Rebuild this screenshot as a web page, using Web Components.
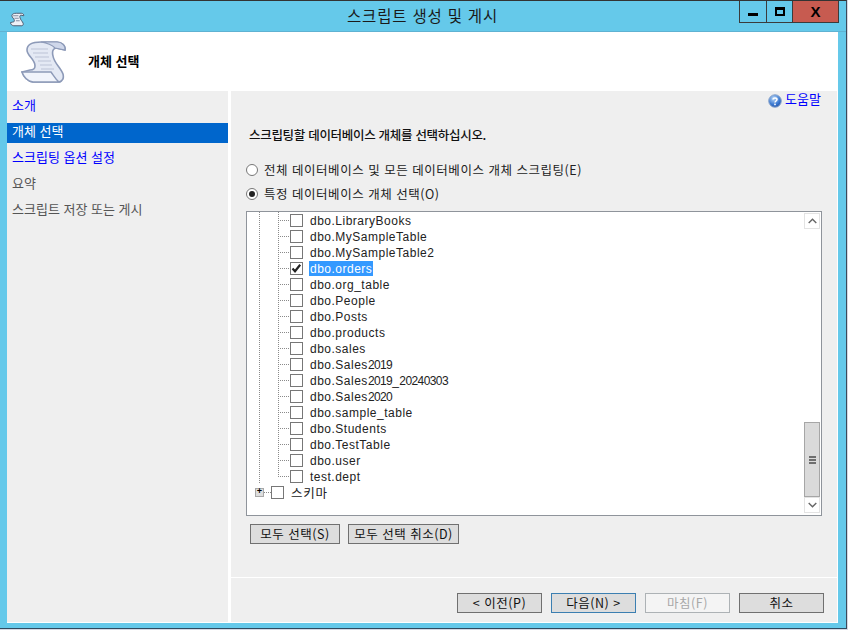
<!DOCTYPE html>
<html lang="ko">
<head>
<meta charset="utf-8">
<title>스크립트 생성 및 게시</title>
<style>
  html, body { margin: 0; height: 100%; background: #d5d8e4; overflow: hidden; }
  body { font: 12px "Noto Sans CJK KR", "Liberation Sans", sans-serif; }
</style>
</head>
<body>
<wizard-window>
  <title-bar slot="title">스크립트 생성 및 게시</title-bar>
  <wizard-header slot="header">개체 선택</wizard-header>
  <nav-panel slot="nav">
    <nav-item kind="link">소개</nav-item>
    <nav-item kind="active">개체 선택</nav-item>
    <nav-item kind="link">스크립팅 옵션 설정</nav-item>
    <nav-item>요약</nav-item>
    <nav-item>스크립트 저장 또는 게시</nav-item>
  </nav-panel>
  <object-page slot="page"></object-page>
</wizard-window>

<script>
// small helper, every element here has the same shadow setup
function shadow(el, html) {
  el.attachShadow({ mode: 'open' }).innerHTML = html;
}

const SCROLL_ICON = `
<svg viewBox="0 0 48 42" width="48" height="42">
  <path d="M20 1 C13 1 6 3 6 9 C6 15 14 18 14 25 C14 28 12 29 9 29 L1 31 C3 37 6 40 12 41 L38 41 C42 40 43 37 42 33 C40 27 33 22 32 15 C31 11 31 8 35 7 L44 9 C45 5 41 1 36 1 Z" fill="#e4e9f4" stroke="#8d9ab8" stroke-width="1.6"/>
  <path d="M1 31 L30 31 C33 35 34 38 38 41 L12 41 C6 40 3 37 1 31 Z" fill="#f1f4fb" stroke="#8d9ab8" stroke-width="1.4"/>
  <path d="M34 7 C30 3 26 2 20 1 L36 1 C41 1 45 5 44 9 Z" fill="#cfd7ea" stroke="#8d9ab8" stroke-width="1.2"/>
  <path d="M10 8 H27 M12 12 H27 M14 16 H28 M17 20 H30 M19 24 H31 M20 28 H33" stroke="#bcc4d6" stroke-width="1.2" fill="none"/>
</svg>`;

class WizardWindow extends HTMLElement {
  constructor() {
    super();
    shadow(this, `
    <style>
      :host { display: flex; flex-direction: column; width: 847px; height: 629px; box-sizing: border-box;
        background: #65c9ea; border-top: 1px solid #333; border-right: 1px solid #3c4a5a; border-bottom: 1px solid #2f4a5f; }
      .client { flex: 1; display: flex; flex-direction: column; margin: 0 8px 5px 7px; background: #fff; min-height: 0; }
      .body { flex: 1; display: flex; gap: 3px; min-height: 0; padding-right: 1px; padding-bottom: 1px; }
    </style>
    <slot name="title"></slot>
    <div class="client">
      <slot name="header"></slot>
      <div class="body"><slot name="nav"></slot><slot name="page"></slot></div>
    </div>`);
  }
}

class TitleBar extends HTMLElement {
  constructor() {
    super();
    shadow(this, `
    <style>
      :host { display: grid; grid-template-columns: 1fr auto 1fr; height: 31px; flex: none; color: #1a1a1a;
        font: 15.5px "Noto Sans CJK KR", sans-serif; box-shadow: inset 0 -1px 0 #5fb2d2; }
      .ico { padding: 8px 0 0 10px; }
      .t { line-height: 29px; letter-spacing: .8px; margin-left: -1px; }
      .btns { justify-self: end; display: flex; height: 22px; margin-right: 7px; border: 1px solid #3b3b3b; border-top: 0; box-sizing: border-box; }
      .btns div { display: flex; align-items: center; justify-content: center; box-sizing: border-box; }
      .min { width: 27px; border-right: 1px solid #3b3b3b; }
      .max { width: 26px; border-right: 1px solid #3b3b3b; }
      .cls { width: 45px; background: #c75b50; font: bold 15px "Liberation Sans", sans-serif; color: #000; }
      .min i { display: block; width: 10px; height: 3px; background: #000; margin-top: 5px; }
      .max i { display: block; width: 6px; height: 4px; border: 2px solid #000; border-top-width: 3px; }
    </style>
    <div class="ico">
      <svg viewBox="0 0 48 42" width="15" height="15">
        <path d="M20 1 C13 1 6 3 6 9 C6 15 14 18 14 25 C14 28 12 29 9 29 L1 31 C3 37 6 40 12 41 L38 41 C42 40 43 37 42 33 C40 27 33 22 32 15 C31 11 31 8 35 7 L44 9 C45 5 41 1 36 1 Z" fill="#eef1f8" stroke="#4d586c" stroke-width="3"/>
        <path d="M10 9 H27 M14 17 H28 M19 25 H31" stroke="#7c869c" stroke-width="3" fill="none"/>
      </svg>
    </div>
    <div class="t"><slot></slot></div>
    <div class="btns">
      <div class="min"><i></i></div>
      <div class="max"><i></i></div>
      <div class="cls">X</div>
    </div>`);
  }
}

class WizardHeader extends HTMLElement {
  constructor() {
    super();
    shadow(this, `
    <style>
      :host { display: flex; align-items: center; gap: 19px; height: 59px; flex: none; padding: 0 0 0 14px; background: #fff;
        font: bold 13px "Noto Sans CJK KR", sans-serif; color: #000; }
      svg { display: block; margin-top: 1px; }
      div { margin-top: -3px; }
    </style>
    ${SCROLL_ICON}
    <div><slot></slot></div>`);
  }
}

class NavPanel extends HTMLElement {
  constructor() {
    super();
    shadow(this, `
    <style>
      :host { display: flex; flex-direction: column; gap: 6px; width: 221px; flex: none; padding-top: 6px; box-sizing: border-box; background: #efefef; }
    </style>
    <slot></slot>`);
  }
}

class NavItem extends HTMLElement {
  constructor() {
    super();
    shadow(this, `
    <style>
      :host { display: block; height: 20px; padding-left: 5px; font: 13px/16px "Noto Sans CJK KR", sans-serif; color: #555; }
      :host([kind="link"]) { color: #0000ff; }
      :host([kind="active"]) { color: #fff; background: #0066cc; }
    </style>
    <slot></slot>`);
  }
}

class WinButton extends HTMLElement {
  constructor() {
    super();
    shadow(this, `
    <style>
      :host { display: flex; align-items: center; justify-content: center; box-sizing: border-box; height: 20px; width: 85px; padding-bottom: 1px;
        background: #dddddd; border: 1px solid #707070; color: #111; font: 12.5px/15px "Noto Sans CJK KR", sans-serif; letter-spacing: .5px; }
      :host([primary]) { border-color: #3c7fb1; }
      :host([disabled]) { background: #f4f4f4; border-color: #adb2b5; color: #a8a8a8; }
    </style>
    <slot></slot>`);
  }
}

class RadioOption extends HTMLElement {
  constructor() {
    super();
    shadow(this, `
    <style>
      :host { display: flex; align-items: center; gap: 6px; height: 18px; line-height: 16px; font-family: "Noto Sans CJK KR", sans-serif; font-size: 12.5px; color: #222; letter-spacing: .52px; }
      i { display: flex; align-items: center; justify-content: center; width: 12px; height: 12px; box-sizing: border-box;
        border: 1px solid #777; border-radius: 50%; background: #fff; }
      :host([checked]) i::after { content: ""; width: 6px; height: 6px; border-radius: 50%; background: #222; }
    </style>
    <i></i><div><slot></slot></div>`);
  }
}

class TreeRow extends HTMLElement {
  constructor() {
    super();
    const dots = 'repeating-linear-gradient(#8a8a8a 0 1px, transparent 1px 2px)';
    const dotsH = 'repeating-linear-gradient(90deg, #8a8a8a 0 1px, transparent 1px 2px)';
    shadow(this, `
    <style>
      :host { display: flex; align-items: center; height: 16px; font: 12px "Liberation Sans", sans-serif; color: #222; letter-spacing: .5px; }
      .rail { width: 43px; height: 16px; flex: none; background-repeat: no-repeat;
        background-image: ${dots}, ${dots}, ${dotsH};
        background-size: 1px 16px, 1px 16px, 12px 1px;
        background-position: 12px 0, 31px 0, 31px 8px; }
      :host([last]) .rail { background-size: 1px 16px, 1px 8px, 12px 1px; }
      .box { width: 13px; height: 13px; flex: none; box-sizing: border-box; border: 1px solid #777; background: #fff; display: flex; }
      .label { margin-left: 6px; padding: 0 1px 0 1px; height: 15px; line-height: 16px; white-space: nowrap; }
      :host([selected]) .label { background: #3399ff; color: #fff; }
      svg { display: none; }
      :host([checked]) svg { display: block; }
    </style>
    <div class="rail"></div>
    <div class="box"><svg viewBox="0 0 11 11" width="11" height="11"><path d="M1.5 5.5 L4 8.2 L9.2 1.8" fill="none" stroke="#222" stroke-width="2.2"/></svg></div>
    <div class="label"><slot></slot></div>`);
  }
}

class TreeBranch extends HTMLElement {
  constructor() {
    super();
    shadow(this, `
    <style>
      :host { display: flex; align-items: center; height: 16px; padding-left: 8px; font: 12.5px/15px "Noto Sans CJK KR", sans-serif; color: #222; }
      .exp { width: 9px; height: 9px; flex: none; box-sizing: border-box; border: 1px solid #a8a8a8; background: #ddd; color: #000;
        display: flex; align-items: center; justify-content: center; font: bold 9px/7px "Liberation Mono", monospace; }
      .dash { width: 7px; height: 1px; flex: none; background: repeating-linear-gradient(90deg, #8a8a8a 0 1px, transparent 1px 2px); }
      .box { width: 13px; height: 13px; flex: none; box-sizing: border-box; border: 1px solid #777; background: #fff; }
      .label { margin-left: 7px; letter-spacing: .8px; }
    </style>
    <div class="exp">+</div><div class="dash"></div><div class="box"></div>
    <div class="label"><slot></slot></div>`);
  }
}

class ScrollBar extends HTMLElement {
  constructor() {
    super();
    shadow(this, `
    <style>
      :host { display: flex; flex-direction: column; width: 16px; flex: none; background: #fff; box-sizing: border-box; }
      .arrow { height: 16px; flex: none; box-sizing: border-box; border: 1px solid #e3e3e3; background: #fff; display: flex; align-items: center; justify-content: center; }
      .track { flex: 1; display: flex; flex-direction: column; justify-content: flex-end; }
      .thumb { height: 75px; box-sizing: border-box; background: #dadada; border: 1px solid #a6a6a6; display: flex; flex-direction: column; gap: 1px; align-items: center; justify-content: center; }
      .thumb i { display: block; width: 7px; height: 2px; background: #6e6e6e; }
    </style>
    <div class="arrow"><svg width="9" height="6" viewBox="0 0 9 6"><path d="M.7 5 L4.5 1.2 L8.3 5" fill="none" stroke="#666" stroke-width="1.4"/></svg></div>
    <div class="track"><div class="thumb"><i></i><i></i><i></i></div></div>
    <div class="arrow"><svg width="9" height="6" viewBox="0 0 9 6"><path d="M.7 1 L4.5 4.8 L8.3 1" fill="none" stroke="#666" stroke-width="1.4"/></svg></div>`);
  }
}

class ObjectTree extends HTMLElement {
  constructor() {
    super();
    shadow(this, `
    <style>
      :host { display: flex; height: 305px; width: 576px; box-sizing: border-box; background: #fff; border: 1px solid #8f949b; box-shadow: inset 0 0 0 1px #fff; }
      .rows { flex: 1; min-width: 0; overflow: hidden; }
      scroll-bar { margin: 1px 1px 2px 0; }
    </style>
    <div class="rows"><slot></slot></div>
    <scroll-bar></scroll-bar>`);
  }
}

class ObjectPage extends HTMLElement {
  constructor() {
    super();
    const names = ['dbo.LibraryBooks', 'dbo.MySampleTable', 'dbo.MySampleTable2', 'dbo.orders', 'dbo.org_table',
      'dbo.People', 'dbo.Posts', 'dbo.products', 'dbo.sales', 'dbo.Sales2019', 'dbo.Sales2019_20240303', 'dbo.Sales2020',
      'dbo.sample_table', 'dbo.Students', 'dbo.TestTable', 'dbo.user', 'test.dept'];
    const rows = names.map(n => {
      const attrs = n === 'dbo.orders' ? ' checked selected' : n === 'test.dept' ? ' last' : '';
      // digits are narrower in the original font
      const label = n.replace(/\d+/g, d => `<span style="letter-spacing:-.6px">${d}</span>`);
      return `<tree-row${attrs}>${label}</tree-row>`;
    }).join('');
    shadow(this, `
    <style>
      :host { display: flex; flex-direction: column; flex: 1; min-width: 0; background: #efefef; font: 12.5px "Noto Sans CJK KR", sans-serif; color: #222; }
      .content { flex: 1; display: flex; flex-direction: column; padding: 0 16px 0 15px; }
      .help { display: flex; justify-content: flex-end; align-items: center; gap: 3px; height: 18px; color: #0000ff; font-size: 13px; line-height: 16px; }
      .help span { margin-top: -2px; }
      .help svg { display: block; margin-top: 2px; }
      .intro { margin: 17px 0 0 3px; height: 18px; line-height: 18px; font-weight: 500; color: #111; letter-spacing: -.3px; }
      .radios { display: flex; flex-direction: column; gap: 6px; margin-top: 17px; }
      object-tree { margin-top: 8px; }
      .pick { display: flex; gap: 8px; margin: 8px 0 0 4px; }
      .foot { height: 45px; flex: none; border-top: 1px solid #fff; display: flex; justify-content: flex-end; gap: 9px; padding: 15px 13px 0 0; box-sizing: border-box; }
    </style>
    <div class="content">
      <div class="help">
        <svg width="14" height="14" viewBox="0 0 14 14"><defs><radialGradient id="g" cx=".4" cy=".3" r=".8"><stop offset="0" stop-color="#b9d8f8"/><stop offset=".6" stop-color="#3a78d0"/><stop offset="1" stop-color="#1c4aa0"/></radialGradient></defs><circle cx="7" cy="7" r="6.3" fill="url(#g)" stroke="#8fa8cc"/><path d="M5 5.4 C5 3.6 9 3.6 9 5.6 C9 7 7 7 7 8.6" fill="none" stroke="#fff" stroke-width="1.5"/><rect x="6.2" y="9.6" width="1.6" height="1.6" fill="#fff"/></svg>
        <span>도움말</span>
      </div>
      <div class="intro">스크립팅할 데이터베이스 개체를 선택하십시오.</div>
      <div class="radios">
        <radio-option>전체 데이터베이스 및 모든 데이터베이스 개체 스크립팅(E)</radio-option>
        <radio-option checked>특정 데이터베이스 개체 선택(O)</radio-option>
      </div>
      <object-tree>${rows}<tree-branch>스키마</tree-branch></object-tree>
      <div class="pick">
        <win-button style="width:90px;height:20px">모두 선택(S)</win-button>
        <win-button style="width:111px;height:20px">모두 선택 취소(D)</win-button>
      </div>
    </div>
    <div class="foot">
      <win-button>&lt; 이전(P)</win-button>
      <win-button primary>다음(N) &gt;</win-button>
      <win-button disabled>마침(F)</win-button>
      <win-button>취소</win-button>
    </div>`);
  }
}

customElements.define('wizard-window', WizardWindow);
customElements.define('title-bar', TitleBar);
customElements.define('wizard-header', WizardHeader);
customElements.define('nav-panel', NavPanel);
customElements.define('nav-item', NavItem);
customElements.define('win-button', WinButton);
customElements.define('radio-option', RadioOption);
customElements.define('tree-row', TreeRow);
customElements.define('tree-branch', TreeBranch);
customElements.define('scroll-bar', ScrollBar);
customElements.define('object-tree', ObjectTree);
customElements.define('object-page', ObjectPage);
</script>
</body>
</html>
